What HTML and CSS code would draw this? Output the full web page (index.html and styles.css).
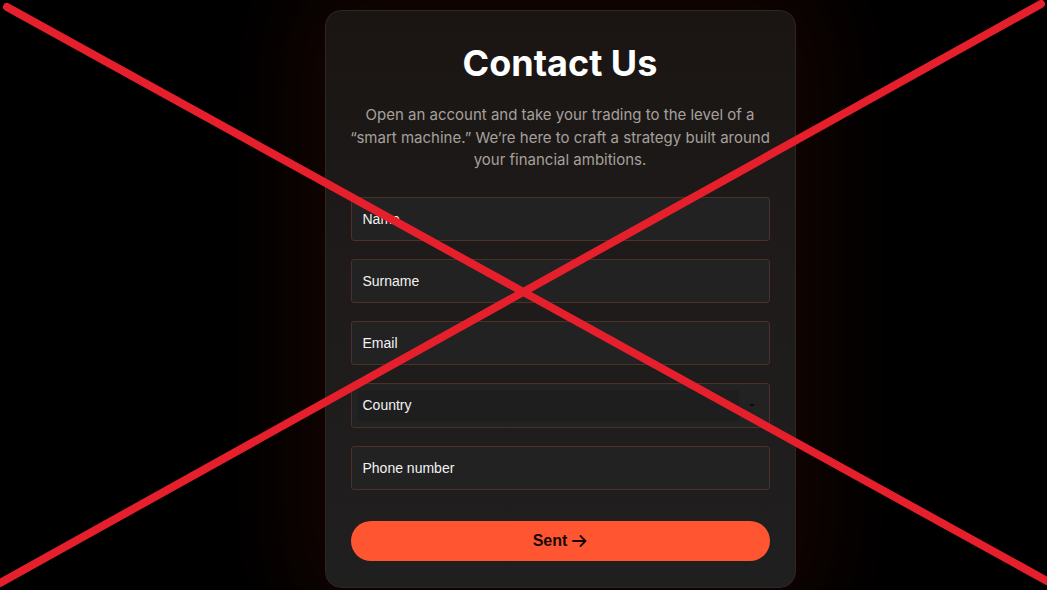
FILE: index.html
```html
<!DOCTYPE html>
<html lang="en">
<head>
    <meta charset="UTF-8">
    <meta name="viewport" content="width=device-width, initial-scale=1.0">
    <title>Contact Us</title>
    <link rel="stylesheet" href="styles.css">
</head>
<body>
    <div class="container">
        <h1>Contact Us</h1>
        <p class="lead">Open an account and take your trading to the level of a “smart machine.” We’re here to craft a strategy built around your financial ambitions.</p>
        <form class="contact-form">
            <input type="text" placeholder="Name">
            <input type="text" placeholder="Surname">
            <input type="email" placeholder="Email">
            <div class="select-wrap">
                <div class="select-box">Country</div>
                <span class="select-arrow"></span>
            </div>
            <input type="tel" placeholder="Phone number">
            <button type="submit">Sent
                <svg width="15" height="12" viewBox="0 0 15 12" fill="none" stroke="currentColor" stroke-width="1.8" stroke-linecap="round" stroke-linejoin="round">
                    <path d="M1 6h12.5M8.5 1l5 5-5 5"/>
                </svg>
            </button>
        </form>
    </div>

    <!-- crossed out -->
    <svg class="cross" viewBox="0 0 1047 590" preserveAspectRatio="none">
        <line x1="7" y1="7" x2="1047" y2="581" />
        <line x1="1041" y1="4" x2="0" y2="583" />
    </svg>
</body>
</html>
```

FILE: styles.css
```css
* {
    margin: 0;
    padding: 0;
    box-sizing: border-box;
}

body {
    font-family: 'Inter', sans-serif;
    background: #000;
    color: #fff;
    height: 100vh;
    overflow: hidden;
    display: flex;
    justify-content: center;
    align-items: flex-start;
    padding: 10px 0 0 73px;
}

.container {
    width: 471px;
    padding: 29px 25px 26px;
    background: linear-gradient(180deg, #1a1513 0%, #1e1b1a 45%, #201f1f 100%);
    border: 1px solid #2c2725;
    border-radius: 16px;
    box-shadow: 0 0 90px 30px rgba(45, 12, 4, 0.45);
    text-align: center;
}

h1 {
    font-size: 36px;
    font-weight: 700;
    line-height: 46px;
    color: #fff;
}

.lead {
    margin: 18px -6px 0;
    font-size: 15px;
    line-height: 22.5px;
    color: #a6a09d;
}

.contact-form {
    margin-top: 25px;
    display: flex;
    flex-direction: column;
    gap: 18px;
}

input {
    width: 100%;
    height: 44px;
    padding: 0 11px;
    font-family: 'Liberation Sans', Arial, sans-serif;
    font-size: 14px;
    color: #fff;
    background-color: #232222;
    border: 1px solid #4a3129;
    border-radius: 3px;
    outline: none;
}

input::placeholder {
    color: #f2f2f2;
}

.select-wrap {
    height: 45px;
    padding: 6px 30px 6px 6px;
    background-color: #232222;
    border: 1px solid #4a3129;
    border-radius: 3px;
    position: relative;
}

.select-box {
    height: 100%;
    padding-left: 5px;
    display: flex;
    align-items: center;
    font-family: 'Liberation Sans', Arial, sans-serif;
    font-size: 14px;
    color: #f2f2f2;
    background-color: #1e1e1e;
    text-align: left;
}

.select-arrow {
    position: absolute;
    right: 14px;
    top: 20px;
    border-left: 3px solid transparent;
    border-right: 3px solid transparent;
    border-top: 3px solid #0c0c0c;
}

button {
    margin-top: 13px;
    width: 100%;
    height: 40px;
    display: flex;
    justify-content: center;
    align-items: center;
    gap: 5px;
    font-family: 'Liberation Sans', Arial, sans-serif;
    font-size: 16px;
    font-weight: 700;
    color: #160805;
    background-color: #ff5530;
    border: none;
    border-radius: 20px;
    cursor: pointer;
}

.cross {
    position: fixed;
    top: 0;
    left: 0;
    width: 100%;
    height: 100%;
    pointer-events: none;
}

.cross line {
    stroke: #e5202c;
    stroke-width: 8;
    stroke-linecap: round;
}
```
